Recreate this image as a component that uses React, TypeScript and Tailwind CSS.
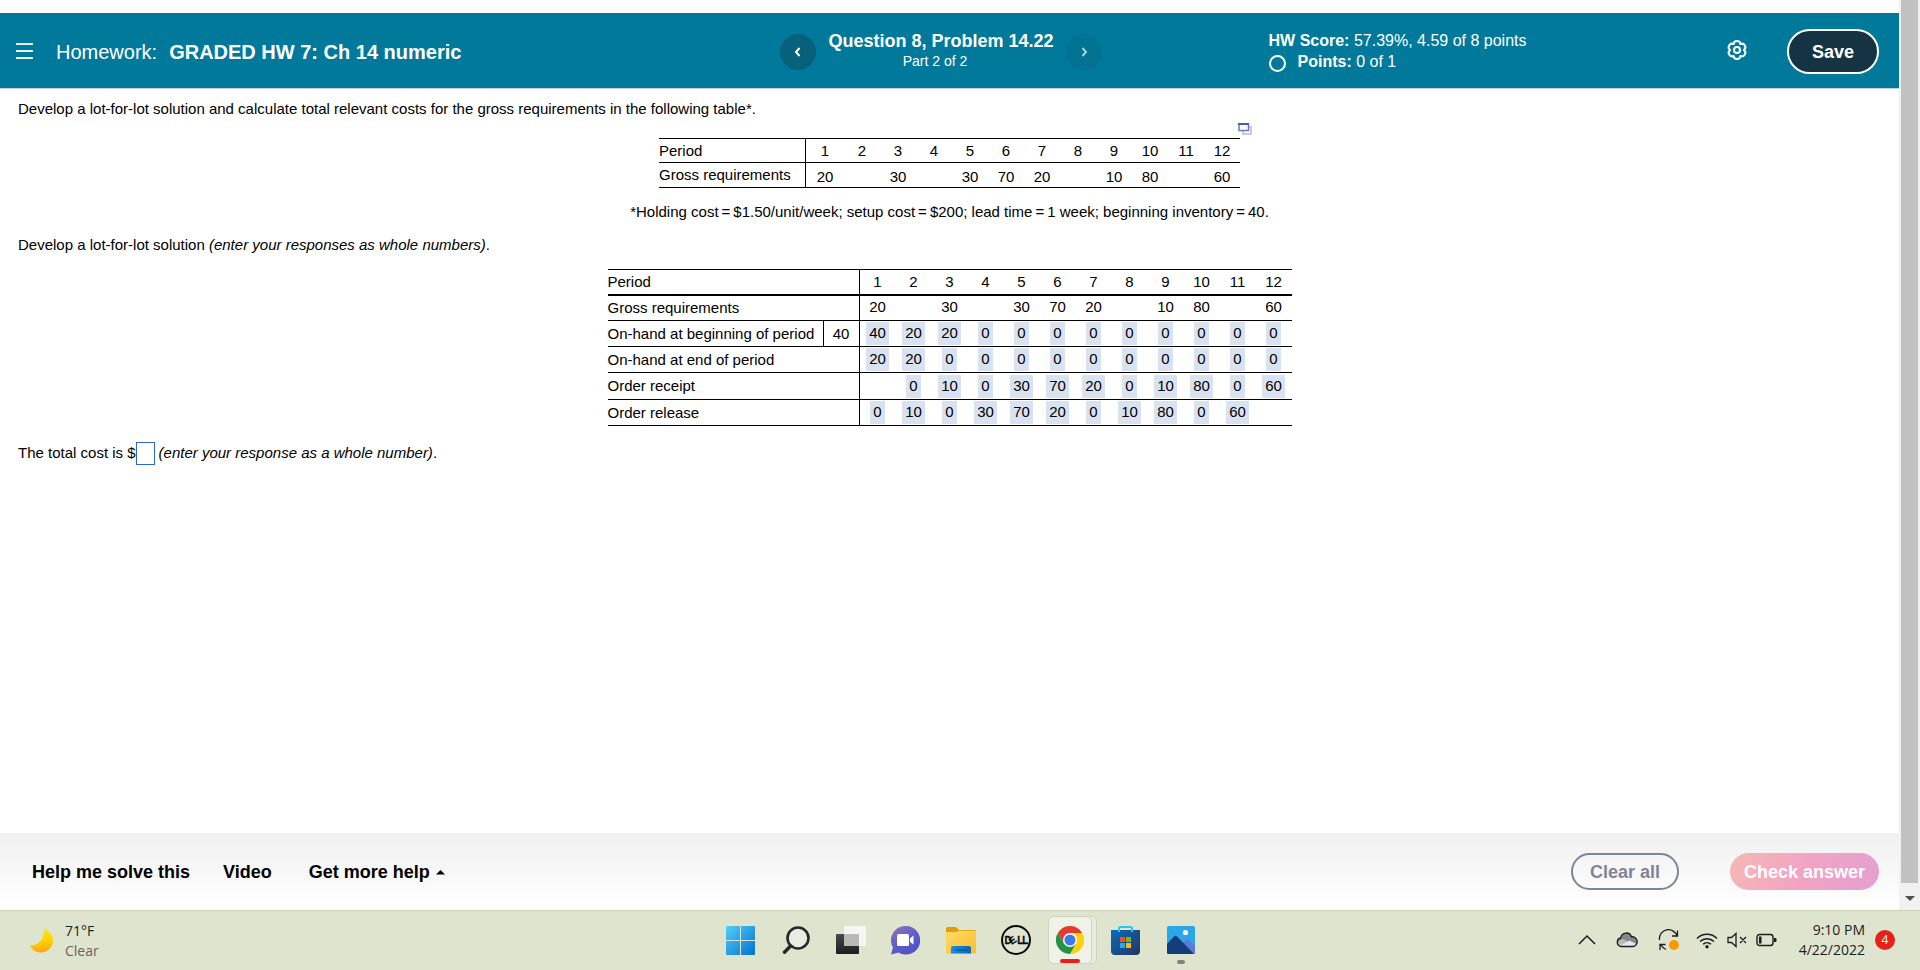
import React from "react";

type Cell = string;

const periods: Cell[] = ["1", "2", "3", "4", "5", "6", "7", "8", "9", "10", "11", "12"];
const gross: Cell[] = ["20", "", "30", "", "30", "70", "20", "", "10", "80", "", "60"];

const answers: { label: string; start?: string; values: Cell[]; height: string }[] = [
  {
    label: "On-hand at beginning of period",
    start: "40",
    values: ["40", "20", "20", "0", "0", "0", "0", "0", "0", "0", "0", "0"],
    height: "h-[26px]",
  },
  {
    label: "On-hand at end of period",
    values: ["20", "20", "0", "0", "0", "0", "0", "0", "0", "0", "0", "0"],
    height: "h-[26px]",
  },
  {
    label: "Order receipt",
    values: ["", "0", "10", "0", "30", "70", "20", "0", "10", "80", "0", "60"],
    height: "h-[27px]",
  },
  {
    label: "Order release",
    values: ["0", "10", "0", "30", "70", "20", "0", "10", "80", "0", "60", ""],
    height: "h-[26px]",
  },
];

function GearIcon() {
  return (
    <svg width="22" height="22" viewBox="0 0 22 22" fill="none" stroke="#fff" strokeWidth="2" strokeLinejoin="round">
      <path d="M17.800 11A3.410 3.410 0 0 0 14.400 5.110 3.410 3.410 0 0 0 7.600 5.110 3.410 3.410 0 0 0 4.200 11 3.410 3.410 0 0 0 7.600 16.890 3.410 3.410 0 0 0 14.400 16.890 3.410 3.410 0 0 0 17.800 11Z" />
      <circle cx="11" cy="11" r="3" />
    </svg>
  );
}

function Header() {
  return (
    <header className="grid h-[76px] grid-cols-[1fr_auto_1fr] items-center border-b border-[#c3cede] bg-[#00799b] pl-[3px] pr-5 pt-[2px] text-white">
      <div className="flex items-center gap-[23px] pl-[13px]">
        <button aria-label="Menu" className="flex w-[17px] flex-col gap-[5px] pb-[2px]">
          <span className="h-[2px] w-full bg-white/90" />
          <span className="h-[2px] w-full bg-white/90" />
          <span className="h-[2px] w-full bg-white/90" />
        </button>
        <h1 className="flex gap-3 whitespace-nowrap text-[20px] leading-6">
          Homework: <b>GRADED HW 7: Ch 14 numeric</b>
        </h1>
      </div>
      <div className="flex items-center gap-3">
        <button aria-label="Previous question" className="flex size-9 items-center justify-center rounded-full bg-[#07617c]">
          <svg width="8" height="10" viewBox="0 0 8 10" fill="none" stroke="#fff" strokeWidth="2">
            <path d="M5.500 1 2 5l3.500 4" />
          </svg>
        </button>
        <div className="flex flex-col items-center pb-[2px]">
          <h2 className="whitespace-nowrap text-[18px] font-bold leading-5">Question 8, Problem 14.22</h2>
          <p className="pr-3 text-[14px] leading-5">Part 2 of 2</p>
        </div>
        <button aria-label="Next question" className="flex size-9 items-center justify-center rounded-full bg-[#037393]">
          <svg width="8" height="10" viewBox="0 0 8 10" fill="none" stroke="#a9d0dc" strokeWidth="2">
            <path d="M2.500 1 6 5 2.500 9" />
          </svg>
        </button>
      </div>
      <div className="flex items-center pl-[167px]">
        <div className="whitespace-nowrap text-[16px] leading-5">
          <p>
            <b>HW Score:</b> 57.39%, 4.59 of 8 points
          </p>
          <p className="flex items-center gap-3">
            <span className="mt-1 size-[17px] rounded-full border-2 border-white" />
            <span>
              <b>Points:</b> 0 of 1
            </span>
          </p>
        </div>
        <button aria-label="Settings" className="ml-auto mr-[39px] pb-1">
          <GearIcon />
        </button>
        <button className="h-[45px] w-[92px] rounded-full border-2 border-white bg-[#163344] text-[18px] font-bold leading-5">
          Save
        </button>
      </div>
    </header>
  );
}

function RequirementsTable() {
  return (
    <div className="mx-auto flex w-fit flex-col">
      <div className="flex h-[19px] justify-end pt-1">
        <button aria-label="Open table in new window" className="h-3 w-[14px]">
          <svg width="14" height="12" viewBox="0 0 14 12" fill="none">
            <path d="M5 4h8v7H5z" fill="#fff" stroke="#c5cae8" strokeWidth="2" />
            <path d="M1 1h9.500v6.500H1z" fill="#fff" stroke="#6a78bf" strokeWidth="1.500" />
            <path d="M0 0h11v2H0z" fill="#4b5bb0" />
          </svg>
        </button>
      </div>
      <table className="mx-3 border-separate border-spacing-0 whitespace-nowrap">
        <thead>
          <tr className="h-[25px]">
            <th scope="row" className="w-[147px] border-y border-r border-black p-0 text-left font-normal">
              Period
            </th>
            {periods.map((p, i) => (
              <th key={p} scope="col" className={`border-y border-black p-0 text-center font-normal ${i === 0 ? "w-[38px]" : "w-9"}`}>
                {p}
              </th>
            ))}
          </tr>
        </thead>
        <tbody>
          <tr className="h-[25px]">
            <th scope="row" className="border-b border-r border-black p-0 text-left font-normal">
              Gross requirements
            </th>
            {gross.map((g, i) => (
              <td key={i} className="border-b border-black p-0 text-center align-bottom">
                {g}
              </td>
            ))}
          </tr>
        </tbody>
      </table>
    </div>
  );
}

function SolutionTable() {
  return (
    <table className="mx-auto mt-[14px] border-separate border-spacing-0 whitespace-nowrap">
      <thead>
        <tr className="h-[27px]">
          <th colSpan={2} scope="row" className="border-b-2 border-r border-t border-black p-0 text-left font-normal">
            Period
          </th>
          {periods.map((p) => (
            <th key={p} scope="col" className="w-9 border-b-2 border-t border-black p-0 text-center font-normal">
              {p}
            </th>
          ))}
        </tr>
      </thead>
      <tbody>
        <tr className="h-[25px]">
          <th colSpan={2} scope="row" className="border-b border-r border-black p-0 text-left font-normal">
            Gross requirements
          </th>
          {gross.map((g, i) => (
            <td key={i} className="border-b border-black p-0 pb-[2px] text-center">
              {g}
            </td>
          ))}
        </tr>
        {answers.map((row) => (
          <tr key={row.label} className={row.height}>
            <th
              colSpan={row.start ? 1 : 2}
              scope="row"
              className={`border-b border-r border-black p-0 text-left font-normal ${row.start ? "w-[216px]" : ""}`}
            >
              {row.label}
            </th>
            {row.start && <td className="w-9 border-b border-r border-black p-0 text-center">{row.start}</td>}
            {row.values.map((v, i) => (
              <td key={i} className="border-b border-black p-0 text-center">
                {v && <span className="mx-auto block h-[23px] w-fit bg-[#d9e2f1] px-[3px] leading-[21px]">{v}</span>}
              </td>
            ))}
          </tr>
        ))}
      </tbody>
    </table>
  );
}

function Footer() {
  return (
    <footer className="flex h-[77px] items-center bg-linear-to-b from-[#f0f0f0] to-white pl-8 pr-5 text-[18px] font-bold leading-5">
      <nav className="flex items-center gap-[33px] whitespace-nowrap text-black">
        <button>Help me solve this</button>
        <button>Video</button>
        <button className="flex items-center gap-[6px] pl-1">
          Get more help
          <svg width="9" height="5" viewBox="0 0 9 5" className="mt-[2px]">
            <path d="M0 4.500 4.500 0 9 4.500Z" fill="#000" />
          </svg>
        </button>
      </nav>
      <div className="ml-auto flex gap-[51px]">
        <button className="h-[37px] w-[108px] rounded-full border-2 border-[#7f8596] text-[#7f8596]">Clear all</button>
        <button className="h-[37px] w-[149px] rounded-full bg-linear-110 from-[#f5b8b4] via-[#f2a3c3] to-[#e3a0d0] text-white">
          Check answer
        </button>
      </div>
    </footer>
  );
}

function Scrollbar() {
  return (
    <div className="flex w-[21px] shrink-0 flex-col items-center bg-[#f1f1f1]">
      <div className="w-[17px] flex-1 bg-[#c1c1c1]" />
      <div className="flex h-[27px] items-center pt-1">
        <svg width="10" height="5" viewBox="0 0 10 5">
          <path d="M0 0h10L5 5Z" fill="#505050" />
        </svg>
      </div>
    </div>
  );
}

function WindowsIcon() {
  return (
    <svg width="29" height="29" viewBox="0 0 29 29">
      <defs>
        <linearGradient id="win" x1="0" y1="0" x2="29" y2="29" gradientUnits="userSpaceOnUse">
          <stop offset="0" stopColor="#4fd0fb" />
          <stop offset="1" stopColor="#0371d0" />
        </linearGradient>
      </defs>
      <path d="M1 0h13v14H0V1a1 1 0 0 1 1-1ZM15 0h13a1 1 0 0 1 1 1v13H15ZM0 15h14v14H1a1 1 0 0 1-1-1ZM15 15h14v13a1 1 0 0 1-1 1H15Z" fill="url(#win)" />
    </svg>
  );
}

function SearchIcon() {
  return (
    <svg width="28" height="28" viewBox="0 0 28 28" fill="none" stroke="#26272a" strokeLinecap="round">
      <circle cx="16" cy="12" r="10.500" strokeWidth="2.600" fill="#e9ecdf" />
      <path d="m8.500 20-6 6.200" strokeWidth="3.400" />
    </svg>
  );
}

function TaskViewIcon() {
  return (
    <svg width="30" height="28" viewBox="0 0 30 28">
      <defs>
        <linearGradient id="tvd" x1="0" y1="0" x2="0" y2="1">
          <stop offset="0" stopColor="#4a4a4a" />
          <stop offset="1" stopColor="#1c1c1c" />
        </linearGradient>
      </defs>
      <rect x="0" y="8" width="23" height="20" rx="1" fill="url(#tvd)" />
      <rect x="8" y="0" width="22" height="20" rx="1" fill="#f5f5f4" />
      <path d="M8 8h15v12H8z" fill="#b9bab6" />
    </svg>
  );
}

function ChatIcon() {
  return (
    <svg width="29" height="29" viewBox="0 0 29 29">
      <defs>
        <linearGradient id="chat" x1="0.100" y1="0" x2="0.700" y2="1">
          <stop offset="0" stopColor="#8f72b8" />
          <stop offset="0.500" stopColor="#5f5fca" />
          <stop offset="1" stopColor="#5250c4" />
        </linearGradient>
      </defs>
      <path d="M14.500 0a14.300 14.300 0 1 1-7 26.500L0 28.500l2-7A14.300 14.300 0 0 1 14.500 0Z" fill="url(#chat)" />
      <rect x="6" y="8" width="12" height="12" rx="1.500" fill="#fff" />
      <path d="M19 12.500 22.500 9.500v9L19 16Z" fill="#fff" />
    </svg>
  );
}

function ExplorerIcon() {
  return (
    <svg width="30" height="27" viewBox="0 0 30 27">
      <defs>
        <linearGradient id="fold" x1="0" y1="0" x2="1" y2="1">
          <stop offset="0" stopColor="#ffd967" />
          <stop offset="1" stopColor="#fdbf2d" />
        </linearGradient>
        <linearGradient id="foldb" x1="0" y1="0" x2="1" y2="0">
          <stop offset="0" stopColor="#1592df" />
          <stop offset="1" stopColor="#0867b8" />
        </linearGradient>
      </defs>
      <path d="M0 1.500A1.500 1.500 0 0 1 1.500 0H10l3 3h16a1 1 0 0 1 1 1v6H0Z" fill="#e09f06" />
      <path d="M0 5h10l3-1.300h16a1 1 0 0 1 1 1V25.500a1 1 0 0 1-1 1H1a1 1 0 0 1-1-1Z" fill="url(#fold)" />
      <path d="M5 26.500V21a2 2 0 0 1 2-2h16a2 2 0 0 1 2 2v5.500Z" fill="url(#foldb)" />
      <path d="M9 22.500h12v1.200H9z" fill="#064f92" />
    </svg>
  );
}

function DellIcon() {
  return (
    <svg width="30" height="30" viewBox="0 0 30 30">
      <circle cx="15" cy="15" r="14" fill="none" stroke="#0b0b0b" strokeWidth="2" />
      <text x="3.500 10.800 16.200 21.200" y="18.600 20 18.600 18.600" rotate="0 -35 0 0" className="font-['Liberation_Sans',sans-serif] text-[10px] font-bold" fill="#0b0b0b" stroke="#0b0b0b" strokeWidth="0.300">
        DELL
      </text>
    </svg>
  );
}

function ChromeIcon() {
  return (
    <svg width="28" height="28" viewBox="0 0 48 48">
      <path d="M24 12h20.800A24 24 0 0 0 3.200 12l10.400 18Z" fill="#e33b2e" />
      <path d="M34.400 30 24 48A24 24 0 0 0 44.800 12H24Z" fill="#fdd00c" />
      <path d="M13.600 30 3.200 12A24 24 0 0 0 24 48l10.400-18Z" fill="#229342" />
      <circle cx="24" cy="24" r="12" fill="#fff" />
      <circle cx="24" cy="24" r="9.500" fill="#3a7cec" />
    </svg>
  );
}

function StoreIcon() {
  return (
    <svg width="29" height="29" viewBox="0 0 29 29">
      <defs>
        <linearGradient id="store" x1="0" y1="0" x2="1" y2="1">
          <stop offset="0" stopColor="#0a6cbd" />
          <stop offset="1" stopColor="#25355f" />
        </linearGradient>
      </defs>
      <path d="M0 4h29v21a4 4 0 0 1-4 4H4a4 4 0 0 1-4-4Z" fill="url(#store)" />
      <path d="M8 6V2.200A1.200 1.200 0 0 1 9.200 1h10.600A1.200 1.200 0 0 1 21 2.200V6" fill="none" stroke="#2bc3f3" strokeWidth="2" />
      <path d="M9 11h5v5H9z" fill="#f25022" />
      <path d="M15 11h5v5h-5z" fill="#7fba00" />
      <path d="M9 17h5v5H9z" fill="#25a9ee" />
      <path d="M15 17h5v5h-5z" fill="#ffb900" />
    </svg>
  );
}

function PhotosIcon() {
  return (
    <svg width="28" height="28" viewBox="0 0 28 28">
      <defs>
        <clipPath id="ph">
          <rect width="28" height="28" rx="1.500" />
        </clipPath>
      </defs>
      <g clipPath="url(#ph)">
        <path d="M0 0h28v28H0z" fill="#2aa7e8" />
        <path d="M12 20l7-6.500a2 2 0 0 1 2.500 0L28 20v8H12Z" fill="#5f79d6" />
        <path d="M-2 20 7 10.500a2 2 0 0 1 3 0L27 28H-2Z" fill="#133e7c" />
      </g>
      <circle cx="18.500" cy="6.500" r="2.600" fill="#fff" />
    </svg>
  );
}

function TaskSlot({ label, children }: { label: string; children: React.ReactNode }) {
  return (
    <button aria-label={label} className="flex h-12 w-[55px] items-center justify-center">
      {children}
    </button>
  );
}

function Tray() {
  return (
    <div className="flex flex-1 items-center justify-end pr-[25px]">
      <div className="flex items-center gap-5">
        <button aria-label="Show hidden icons">
          <svg width="18" height="12" viewBox="0 0 18 12" fill="none" stroke="#1c1c1c" strokeWidth="1.500">
            <path d="m1 10 8-8 8 8" />
          </svg>
        </button>
        <svg width="22" height="16" viewBox="0 0 22 16">
          <path d="M5 14.500A4.300 4.300 0 0 1 4.800 6 5.500 5.500 0 0 1 15.500 4.800a4.900 4.900 0 0 1 1.500 9.700Z" fill="#85878a" />
          <path d="M2 12C2 8 6 6 9 8l4 2.200-7 4C3.500 14.500 2.500 13.500 2 12Z" fill="#b8babb" />
          <path d="M4 14 13.500 8.500l7 3.500a4 4 0 0 1-3.500 2.500H5Z" fill="#e6e7e9" />
          <path d="M5 14.500A4.300 4.300 0 0 1 4.800 6 5.500 5.500 0 0 1 15.500 4.800a4.900 4.900 0 0 1 1.500 9.700Z" fill="none" stroke="#1c1c1c" strokeWidth="1.300" />
        </svg>
        <svg width="22" height="22" viewBox="0 0 22 22" fill="none" stroke="#1c1c1c" strokeWidth="1.300">
          <path d="M1.500 11A9 9 0 0 1 19 7M19.500 1.500V7H14M8 20.500A9 9 0 0 1 3 16M2 21v-5.500h5.500" />
          <circle cx="16" cy="16" r="5" fill="#ff9800" stroke="none" />
        </svg>
      </div>
      <div className="ml-4 flex items-center gap-[9px]">
        <svg width="22" height="17" viewBox="0 0 22 17" fill="none" stroke="#1c1c1c" strokeWidth="1.500">
          <path d="M1 6.500a14 14 0 0 1 20 0M4 9.500a10 10 0 0 1 14 0M7 12.300a6 6 0 0 1 8 0" />
          <circle cx="11" cy="14.700" r="1.700" fill="#1c1c1c" stroke="none" />
        </svg>
        <svg width="20" height="16" viewBox="0 0 20 16" fill="none" stroke="#1c1c1c" strokeWidth="1.300">
          <path d="M1 5.500h3.500L9 1.500v13L4.500 10.500H1ZM13 5l6 6M19 5l-6 6" />
        </svg>
        <svg width="21" height="14" viewBox="0 0 21 14" fill="none">
          <rect x="1" y="1.500" width="16" height="11" rx="2.500" stroke="#1c1c1c" strokeWidth="1.400" />
          <path d="M3 3.500h2.500v7H3zM18 5h1.500a1 1 0 0 1 1 1v2a1 1 0 0 1-1 1H18Z" fill="#1c1c1c" />
        </svg>
      </div>
      <div className="ml-[22px] text-right text-[14px] leading-5 text-[#1b1c18]">
        <p>9:10 PM</p>
        <p>4/22/2022</p>
      </div>
      <span className="ml-[10px] flex size-5 items-center justify-center rounded-full bg-[#e42219] text-[12px] leading-5 text-white">4</span>
    </div>
  );
}

function Taskbar() {
  return (
    <div className="flex h-[60px] items-center border-t border-[#cbd2b5] bg-[#dfe4cf] pb-px font-['Open_Sans','Noto_Sans',sans-serif]">
      <div className="flex flex-1 items-center gap-[11px] pl-[30px]">
        <svg width="24" height="25" viewBox="0 0 24 25">
          <defs>
            <linearGradient id="moon" x1="0.500" y1="0" x2="0.600" y2="1">
              <stop offset="0" stopColor="#ffe014" />
              <stop offset="0.500" stopColor="#ffd500" />
              <stop offset="1" stopColor="#fba11a" />
            </linearGradient>
          </defs>
          <path d="M14 1A12 12 0 1 1 0 17.500C9 17.500 15.500 9.500 14 1Z" fill="url(#moon)" />
        </svg>
        <div className="pt-px text-[14px] leading-5">
          <p className="text-[#22241e]">71°F</p>
          <p className="text-[#63665b]">Clear</p>
        </div>
      </div>
      <div className="flex items-center pr-1">
        <TaskSlot label="Start"><WindowsIcon /></TaskSlot>
        <TaskSlot label="Search"><SearchIcon /></TaskSlot>
        <TaskSlot label="Task view"><TaskViewIcon /></TaskSlot>
        <TaskSlot label="Chat"><ChatIcon /></TaskSlot>
        <TaskSlot label="File Explorer"><ExplorerIcon /></TaskSlot>
        <TaskSlot label="Dell"><DellIcon /></TaskSlot>
        <button aria-label="Chrome" className="flex h-12 w-[55px] justify-center pl-1">
          <span className="h-12 rounded-[5px] border border-[#d0d4c2] bg-[#e9ecdf] pr-1">
            <span className="relative flex h-full w-[43px] items-center justify-center rounded-[5px] border-r border-[#d0d4c2] bg-[#f0f2e8]">
              <ChromeIcon />
              <span className="absolute bottom-0 h-1 w-5 rounded-full bg-[#e42219]" />
            </span>
          </span>
        </button>
        <TaskSlot label="Microsoft Store"><StoreIcon /></TaskSlot>
        <button aria-label="Photos" className="relative flex h-12 w-[55px] items-center justify-center">
          <PhotosIcon />
          <span className="absolute bottom-0 h-1 w-2 rounded-full bg-[#81847a]" />
        </button>
      </div>
      <Tray />
    </div>
  );
}

export default function App() {
  return (
    <div className="flex min-h-screen flex-col bg-white font-['Liberation_Sans',Arial,sans-serif] text-black">
      <div className="flex flex-1">
        <div className="flex flex-1 flex-col pt-[13px]">
          <Header />
          <main className="flex-1 px-[18px] pt-[10px] text-[15px] leading-5">
            <p>Develop a lot-for-lot solution and calculate total relevant costs for the gross requirements in the following table*.</p>
            <RequirementsTable />
            <p className="mt-[14px] text-center">
              *Holding cost{"\u2009=\u2009"}$1.50/unit/week; setup cost{"\u2009=\u2009"}$200; lead time{"\u2009=\u2009"}1 week; beginning inventory{"\u2009=\u2009"}40.
            </p>
            <p className="mt-[13px]">
              Develop a lot-for-lot solution <i>(enter your responses as whole numbers)</i>.
            </p>
            <SolutionTable />
            <div className="mt-4 flex h-[22px] items-center">
              <label htmlFor="total-cost">The total cost is $</label>
              <input id="total-cost" type="text" className="h-[23px] w-[19px] border border-[#2d66d0] bg-white outline-none" />
              <span className="ml-1">
                <i>(enter your response as a whole number)</i>.
              </span>
            </div>
          </main>
          <Footer />
        </div>
        <Scrollbar />
      </div>
      <Taskbar />
    </div>
  );
}
